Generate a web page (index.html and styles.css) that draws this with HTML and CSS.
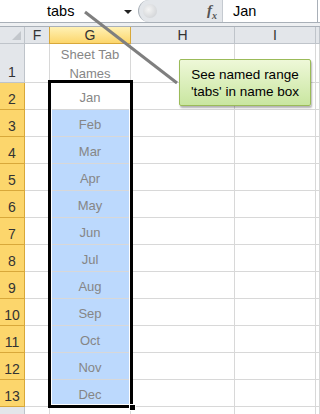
FILE: index.html
```html
<!DOCTYPE html>
<html lang="en">
<head>
  <meta charset="UTF-8">
  <title>Sheet Tab Names</title>
  <link rel="stylesheet" href="styles.css">
</head>
<body>

<div class="app">

  <!-- Formula bar -->
  <div class="formula-bar">
    <div class="name-box">
      <span class="name-text">tabs</span>
      <span class="drop"></span>
    </div>
    <div class="fx-area">
      <span class="knob"></span>
      <span class="fx"><i>f</i><sub>x</sub></span>
    </div>
    <div class="formula-input">Jan</div>
  </div>
  <div class="strip"></div>

  <!-- Grid -->
  <div class="sheet">
    <div class="corner"><span class="tri"></span></div>
    <div class="col-head">F</div>
    <div class="col-head active">G</div>
    <div class="col-head">H</div>
    <div class="col-head">I</div>
    <div class="col-head"></div>

    <div class="row-head">1</div>
    <div class="cell"></div>
    <div class="cell title">Sheet Tab<br>Names</div>
    <div class="cell"></div>
    <div class="cell"></div>
    <div class="cell"></div>

    <div class="row-head active">2</div><div class="cell"></div><div class="cell val">Jan</div><div class="cell"></div><div class="cell"></div><div class="cell"></div>
    <div class="row-head active">3</div><div class="cell"></div><div class="cell val sel">Feb</div><div class="cell"></div><div class="cell"></div><div class="cell"></div>
    <div class="row-head active">4</div><div class="cell"></div><div class="cell val sel">Mar</div><div class="cell"></div><div class="cell"></div><div class="cell"></div>
    <div class="row-head active">5</div><div class="cell"></div><div class="cell val sel">Apr</div><div class="cell"></div><div class="cell"></div><div class="cell"></div>
    <div class="row-head active">6</div><div class="cell"></div><div class="cell val sel">May</div><div class="cell"></div><div class="cell"></div><div class="cell"></div>
    <div class="row-head active">7</div><div class="cell"></div><div class="cell val sel">Jun</div><div class="cell"></div><div class="cell"></div><div class="cell"></div>
    <div class="row-head active">8</div><div class="cell"></div><div class="cell val sel">Jul</div><div class="cell"></div><div class="cell"></div><div class="cell"></div>
    <div class="row-head active">9</div><div class="cell"></div><div class="cell val sel">Aug</div><div class="cell"></div><div class="cell"></div><div class="cell"></div>
    <div class="row-head active">10</div><div class="cell"></div><div class="cell val sel">Sep</div><div class="cell"></div><div class="cell"></div><div class="cell"></div>
    <div class="row-head active">11</div><div class="cell"></div><div class="cell val sel">Oct</div><div class="cell"></div><div class="cell"></div><div class="cell"></div>
    <div class="row-head active">12</div><div class="cell"></div><div class="cell val sel">Nov</div><div class="cell"></div><div class="cell"></div><div class="cell"></div>
    <div class="row-head active">13</div><div class="cell"></div><div class="cell val sel">Dec</div><div class="cell"></div><div class="cell"></div><div class="cell"></div>
    <div class="row-head"></div><div class="cell"></div><div class="cell"></div><div class="cell"></div><div class="cell"></div><div class="cell"></div>
  </div>

  <!-- Selection outline over G2:G13 -->
  <div class="selection"><span class="handle"></span></div>

  <!-- Callout and its pointer line -->
  <svg class="pointer" width="320" height="414">
    <line x1="85" y1="12" x2="177" y2="83" stroke="#7f7f7f" stroke-width="3"/>
  </svg>
  <div class="callout">See named range<br>'tabs' in name box</div>

</div>

</body>
</html>
```

FILE: styles.css
```css
body {
  margin: 0;
  background: #fff;
  font-family: 'Liberation Sans', Arial, sans-serif;
}

.app {
  position: relative;
  width: 320px;
  height: 414px;
  overflow: hidden;
  background: #fff;
}

/* formula bar */
.formula-bar {
  display: flex;
  height: 22px;
  border-bottom: 1px solid #a9b0b8;
}

.name-box {
  width: 138px;
  display: flex;
  align-items: center;
  background: #fff;
  position: relative;
}

.name-text {
  margin-left: 47px;
  font-size: 14.5px;
  color: #000;
}

.drop {
  position: absolute;
  left: 124px;
  top: 10px;
  width: 0;
  height: 0;
  border-left: 4px solid transparent;
  border-right: 4px solid transparent;
  border-top: 4px solid #222;
}

.fx-area {
  width: 83px;
  display: flex;
  align-items: center;
  background: #e3e6ea;
  border-left: 1px solid #a9b0b8;
  border-radius: 11px 0 0 11px;
  position: relative;
}

.knob {
  width: 14px;
  height: 14px;
  margin-left: 4px;
  border-radius: 50%;
  background: radial-gradient(circle at 40% 40%, #f4f4f4 0%, #c9ccd0 100%);
}

.fx {
  margin-left: auto;
  margin-right: 5px;
  font-family: 'Liberation Serif', serif;
  font-size: 15px;
  color: #555;
  font-weight: bold;
}

.fx sub {
  font-size: 10px;
  font-style: italic;
}

.formula-input {
  flex: 1;
  display: flex;
  align-items: center;
  padding-left: 10px;
  font-size: 14.5px;
  color: #000;
  background: #fff;
  border-left: 1px solid #c5cad0;
  border-right: 1px solid #a9b0b8;
  margin-right: 2px;
}

.strip {
  height: 3px;
  background: #eef0f2;
  border-bottom: 1px solid #a9b0b8;
}

/* grid */
.sheet {
  display: grid;
  grid-template-columns: 25px 25px 81px 104px 81px 1fr;
  grid-template-rows: 17px 39px repeat(12, 27px) 20px;
}

.corner,
.col-head,
.row-head {
  background: #e3e6ea;
  color: #333;
  display: flex;
  justify-content: center;
  border-right: 1px solid #bfc4ca;
  border-bottom: 1px solid #bfc4ca;
}

.corner {
  position: relative;
}

.tri {
  position: absolute;
  right: 3px;
  bottom: 3px;
  width: 0;
  height: 0;
  border-left: 9px solid transparent;
  border-bottom: 9px solid #c3c7cc;
}

.col-head {
  align-items: center;
  font-size: 14px;
}

.col-head.active {
  background: linear-gradient(#fff1b5, #fcd66c);
  border-right-color: #d8a83a;
  border-bottom-color: #d8a83a;
  border-left: 1px solid #d8a83a;
  margin-left: -1px;
}

.row-head {
  align-items: flex-end;
  padding-bottom: 2px;
  box-sizing: border-box;
  font-size: 14px;
}

.row-head.active {
  background: #fcd66c;
  border-bottom-color: #d8a83a;
  border-right-color: #d8a83a;
}

.cell {
  border-right: 1px solid #d8d8d8;
  border-bottom: 1px solid #d8d8d8;
  display: flex;
  justify-content: center;
  align-items: flex-end;
  box-sizing: border-box;
  color: #868686;
  font-size: 13px;
}

.cell.title {
  align-items: center;
  text-align: center;
  line-height: 19px;
  padding-top: 1px;
}

.cell.val {
  padding-bottom: 4px;
}

.cell.sel {
  background: #bcd9fd;
}

/* overlays */
.selection {
  position: absolute;
  left: 48px;
  top: 80px;
  width: 79px;
  height: 322px;
  border: 3px solid #000;
  box-shadow: inset 0 0 0 1px #fff;
}

.handle {
  position: absolute;
  right: -6px;
  bottom: -6px;
  width: 5px;
  height: 5px;
  background: #000;
  border: 1px solid #fff;
}

.pointer {
  position: absolute;
  left: 0;
  top: 0;
  pointer-events: none;
}

.callout {
  position: absolute;
  left: 179px;
  top: 59px;
  width: 132px;
  height: 47px;
  box-sizing: border-box;
  border: 1px solid #9bbb59;
  border-radius: 2px;
  background: linear-gradient(#eef8d8, #c9e6a0);
  box-shadow: 1px 2px 2px rgba(0, 0, 0, 0.3);
  display: flex;
  align-items: center;
  justify-content: center;
  text-align: center;
  font-size: 13.5px;
  line-height: 17px;
  color: #000;
}
```
